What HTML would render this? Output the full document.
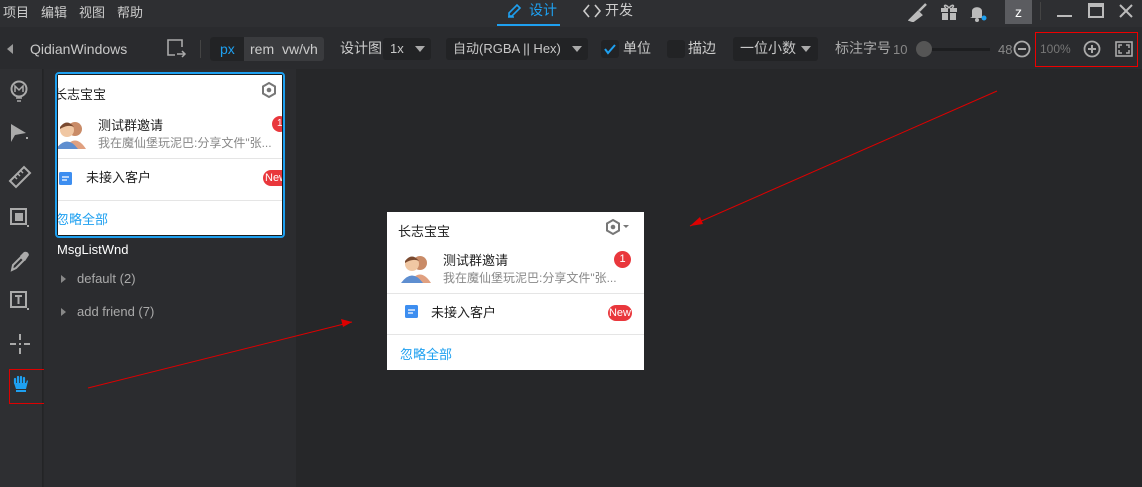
<!DOCTYPE html>
<html><head><meta charset="utf-8"><style>
*{margin:0;padding:0;box-sizing:border-box}
body{width:1142px;height:487px;overflow:hidden;background:#262729;font-family:"Liberation Sans","Noto Sans CJK SC",sans-serif;position:relative;color:#ccc}
.a{position:absolute;white-space:nowrap}
.menu{left:0;top:0;width:1142px;height:27px;background:#2e2f32}
.tb{left:0;top:27px;width:1142px;height:42px;background:#2a2b2e}
.side{left:0;top:69px;width:43px;height:418px;background:#2e2f32;border-right:1px solid #232426}
.panel{left:44px;top:69px;width:252px;height:418px;background:#2b2c2f}
.t13{font-size:13px}
.dd{background:#222325;border-radius:3px;height:22px;top:38px;font-size:13px;line-height:22px;padding-left:7px;color:#c8c8c8}
.tri{position:absolute;width:0;height:0;border-left:5px solid transparent;border-right:5px solid transparent;border-top:6px solid #aaa;top:8px}
.card{background:#fff;color:#222}
</style></head><body>
<div class="a menu"></div>
<div class="a t13" style="left:3px;top:2px;color:#ccc">项目</div>
<div class="a t13" style="left:41px;top:2px;color:#ccc">编辑</div>
<div class="a t13" style="left:79px;top:2px;color:#ccc">视图</div>
<div class="a t13" style="left:117px;top:2px;color:#ccc">帮助</div>
<svg class="a" style="left:506px;top:3px" width="18" height="16"><path d="M3 13 L3 10 L11 2 L14 5 L6 13 Z M2 14 L8 14" stroke="#1ea0f0" stroke-width="1.6" fill="none"/></svg>
<div class="a t13" style="left:529px;top:0px;color:#1ea0f0;font-size:14px">设计</div>
<div class="a" style="left:497px;top:24px;width:63px;height:2px;background:#1ea0f0"></div>
<svg class="a" style="left:582px;top:3px" width="20" height="16"><path d="M7 2 L2 8 L7 14 M13 2 L18 8 L13 14" stroke="#ccc" stroke-width="1.6" fill="none"/></svg>
<div class="a t13" style="left:605px;top:0px;font-size:14px;color:#ccc">开发</div>
<svg class="a" style="left:908px;top:2px" width="22" height="20"><path d="M2 18 L10 10 L13 13 L5 19 Z M11 9 L18 2" stroke="#bbb" stroke-width="2.5" fill="#bbb"/></svg>
<svg class="a" style="left:939px;top:2px" width="20" height="20"><rect x="2" y="6" width="16" height="4" fill="#bbb"/><rect x="3" y="11" width="14" height="7" fill="#bbb"/><rect x="9" y="6" width="2" height="12" fill="#2e2f32"/><path d="M10 6 C6 1 4 4 7 6 M10 6 C14 1 16 4 13 6" stroke="#bbb" fill="none" stroke-width="1.5"/></svg>
<svg class="a" style="left:968px;top:2px" width="22" height="20"><path d="M4 15 L4 9 C4 4 14 4 14 9 L14 15 L16 16 L2 16 Z" fill="#bbb"/><circle cx="9" cy="18" r="2" fill="#bbb"/><circle cx="16" cy="16" r="2.5" fill="#1ea0f0"/></svg>
<div class="a" style="left:1005px;top:0;width:27px;height:24px;background:#5b5c60;color:#fff;font-size:14px;text-align:center;line-height:24px">z</div>
<div class="a" style="left:1040px;top:2px;width:1px;height:18px;background:#444"></div>
<div class="a" style="left:1057px;top:15px;width:15px;height:2px;background:#bbb"></div>
<div class="a" style="left:1088px;top:3px;width:16px;height:15px;border:2px solid #bbb;border-top-width:4px"></div>
<svg class="a" style="left:1118px;top:3px" width="16" height="16"><path d="M2 2 L14 14 M14 2 L2 14" stroke="#bbb" stroke-width="2"/></svg>

<div class="a tb"></div>
<div class="a" style="left:7px;top:44px;border-top:5px solid transparent;border-bottom:5px solid transparent;border-right:6px solid #999"></div>
<div class="a t13" style="left:30px;top:41px;color:#c8c8c8;font-size:14px">QidianWindows</div>
<svg class="a" style="left:166px;top:38px" width="22" height="22"><path d="M9 17 L2 17 L2 2 L16 2 L16 9" stroke="#aaa" stroke-width="1.6" fill="none"/><path d="M11 16 L19 16 M16 13 L19 16 L16 19" stroke="#aaa" stroke-width="1.5" fill="none"/></svg>
<div class="a" style="left:200px;top:40px;width:1px;height:18px;background:#444"></div>
<div class="a" style="left:210px;top:37px;width:114px;height:24px;background:#3a3b3e;border-radius:3px"></div>
<div class="a" style="left:210px;top:37px;width:34px;height:24px;background:#222325;border-radius:3px 0 0 3px"></div>
<div class="a t13" style="left:220px;top:41px;color:#1ea0f0;font-size:14px">px</div>
<div class="a t13" style="left:250px;top:41px;color:#ccc;font-size:14px">rem</div>
<div class="a t13" style="left:282px;top:41px;color:#ccc;font-size:14px">vw/vh</div>
<div class="a t13" style="left:340px;top:38px;color:#ccc;font-size:14px">设计图</div>
<div class="a dd" style="left:383px;width:48px">1x<span class="tri" style="left:32px"></span></div>
<div class="a dd" style="left:446px;width:142px">自动(RGBA || Hex)<span class="tri" style="left:126px"></span></div>
<div class="a" style="left:601px;top:40px;width:18px;height:18px;background:#222325;border-radius:3px"></div>
<svg class="a" style="left:603px;top:42px" width="14" height="14"><path d="M2 7 L5 11 L12 3" stroke="#1ea0f0" stroke-width="2" fill="none"/></svg>
<div class="a t13" style="left:623px;top:38px;color:#ccc;font-size:14px">单位</div>
<div class="a" style="left:667px;top:40px;width:18px;height:18px;background:#222325;border-radius:3px"></div>
<div class="a t13" style="left:688px;top:38px;color:#ccc;font-size:14px">描边</div>
<div class="a dd" style="left:733px;width:85px;height:24px;top:37px;line-height:22px;font-size:14px">一位小数<span class="tri" style="left:68px;top:9px"></span></div>
<div class="a t13" style="left:835px;top:38px;color:#aaa;font-size:14px">标注字号</div>
<div class="a t13" style="left:893px;top:42px;color:#888">10</div>
<div class="a" style="left:925px;top:48px;width:65px;height:3px;background:#1d1e20"></div>
<div class="a" style="left:916px;top:41px;width:16px;height:16px;border-radius:50%;background:#555"></div>
<div class="a t13" style="left:998px;top:42px;color:#888">48</div>
<svg class="a" style="left:1012px;top:39px" width="20" height="20"><circle cx="10" cy="10" r="7.5" stroke="#aaa" stroke-width="1.8" fill="none"/><path d="M6 10 L14 10" stroke="#aaa" stroke-width="2"/></svg>
<div class="a" style="left:1040px;top:42px;color:#777;font-size:12px">100%</div>
<svg class="a" style="left:1082px;top:39px" width="20" height="20"><circle cx="10" cy="10" r="7.5" stroke="#aaa" stroke-width="1.8" fill="none"/><path d="M6 10 L14 10 M10 6 L10 14" stroke="#aaa" stroke-width="2"/></svg>
<svg class="a" style="left:1114px;top:39px" width="20" height="20"><rect x="2" y="3" width="16" height="14" stroke="#aaa" stroke-width="1.6" fill="none"/><path d="M5 9 L5 6 L8 6 M12 6 L15 6 L15 9 M15 11 L15 14 L12 14 M8 14 L5 14 L5 11" stroke="#aaa" stroke-width="1.5" fill="none"/></svg>
<div class="a" style="left:1035px;top:32px;width:103px;height:35px;border:1px solid #e00"></div>

<div class="a side"></div>
<svg class="a" style="left:9px;top:79px" width="22" height="26"><circle cx="10" cy="10" r="7.5" stroke="#aaa" stroke-width="2" fill="none"/><path d="M6 13 L6 7 L10 11 L14 7 L14 13" stroke="#aaa" stroke-width="1.5" fill="none"/><path d="M7 19 L13 19 M8 22 L12 22" stroke="#aaa" stroke-width="1.5"/></svg>
<svg class="a" style="left:10px;top:123px" width="20" height="20"><path d="M1 1 L16 10 L5 12 L1 19 Z" fill="#aaa"/><rect x="16" y="14" width="2" height="2" fill="#aaa"/></svg>
<svg class="a" style="left:8px;top:165px" width="24" height="24"><path d="M2 16 L16 2 L22 8 L8 22 Z" stroke="#aaa" stroke-width="2" fill="none"/><path d="M7 12 L9 14 M10 9 L12 11 M13 6 L15 8" stroke="#aaa" stroke-width="1.5"/></svg>
<svg class="a" style="left:10px;top:208px" width="20" height="20"><rect x="1" y="1" width="15" height="15" stroke="#aaa" stroke-width="2" fill="none"/><rect x="5" y="5" width="8" height="8" fill="#aaa"/><rect x="17" y="17" width="2" height="2" fill="#aaa"/></svg>
<svg class="a" style="left:9px;top:250px" width="22" height="22"><path d="M3 20 L4 15 L12 7 L15 10 L7 18 Z" stroke="#aaa" stroke-width="2" fill="none"/><path d="M11 6 L15 2 Q19 1 20 5 L16 11 Z" fill="#aaa"/></svg>
<svg class="a" style="left:10px;top:291px" width="20" height="20"><rect x="1" y="1" width="15" height="15" stroke="#aaa" stroke-width="2" fill="none"/><path d="M5 5 L12 5 M8.5 5 L8.5 13" stroke="#aaa" stroke-width="2"/><rect x="17" y="17" width="2" height="2" fill="#aaa"/></svg>
<svg class="a" style="left:9px;top:333px" width="22" height="22"><path d="M11 1 L11 7 M11 15 L11 21 M1 11 L7 11 M15 11 L21 11" stroke="#aaa" stroke-width="2"/><rect x="10" y="10" width="2" height="2" fill="#aaa"/></svg>
<div class="a" style="left:9px;top:369px;width:41px;height:35px;border:1px solid #d00"></div>
<svg class="a" style="left:12px;top:375px" width="18" height="20"><path d="M3 8 L3 4 M6 8 L6 2 M9 8 L9 2 M12 8 L12 3" stroke="#1ea0f0" stroke-width="2.2" stroke-linecap="round"/><path d="M2 8 L14 8 L15 5 L16 6 L14 14 L4 14 Z" fill="#1ea0f0"/><rect x="4" y="15" width="10" height="2" fill="#1ea0f0"/></svg>

<div class="a panel"></div>
<div class="a" style="left:55px;top:72px;width:230px;height:166px;border:2px solid #1ea0f0;border-radius:4px;background:#1b1b1b;padding:1px">
<div style="position:relative;width:224px;height:160px;background:#fff;overflow:hidden;color:#222">
<div class="a" style="left:-4px;top:9px;font-size:13px">长志宝宝</div>
<svg class="a" style="left:202px;top:6px" width="18" height="18"><path d="M9 2 L15 5.5 L15 12.5 L9 16 L3 12.5 L3 5.5 Z" stroke="#777" stroke-width="2" fill="none"/><circle cx="9" cy="9" r="2.3" fill="#777"/></svg>
<svg class="a" style="left:-2px;top:43px" width="30" height="32"><circle cx="19" cy="11" r="7" fill="#c98b67"/><path d="M8 31 Q19 14 30 31 Z" fill="#e0a080"/><circle cx="11" cy="12" r="7" fill="#f0c7a3"/><path d="M4 9 Q11 0 18 9 Q12 6 4 11 Z" fill="#7a4a30"/><path d="M0 31 Q11 16 22 31 Z" fill="#5e8ed0"/></svg>
<div class="a" style="left:40px;top:40px;font-size:13px">测试群邀请</div>
<div class="a" style="left:40px;top:59px;font-size:12px;color:#888">我在魔仙堡玩泥巴:分享文件"张...</div>
<div class="a" style="left:214px;top:41px;width:16px;height:16px;border-radius:50%;background:#e9373c;color:#fff;font-size:10px;line-height:16px;padding-left:5px">1</div>
<div class="a" style="left:0;top:83px;width:224px;height:1px;background:#e5e5e5"></div>
<svg class="a" style="left:1px;top:97px" width="13" height="13"><rect width="13" height="13" rx="1.5" fill="#3d8ef0"/><path d="M3 5 L10 5 M3 8 L8 8" stroke="#fff" stroke-width="1.3"/></svg>
<div class="a" style="left:28px;top:92px;font-size:13px">未接入客户</div>
<div class="a" style="left:205px;top:95px;width:30px;height:16px;border-radius:8px;background:#e9373c;color:#fff;font-size:11px;line-height:16px;padding-left:2px">New</div>
<div class="a" style="left:0;top:125px;width:224px;height:1px;background:#e5e5e5"></div>
<div class="a" style="left:-2px;top:134px;font-size:13px;color:#1ea0f0">忽略全部</div>
</div></div>
<div class="a" style="left:57px;top:242px;font-size:13px;color:#fff">MsgListWnd</div>
<div class="a" style="left:61px;top:275px;border-top:4px solid transparent;border-bottom:4px solid transparent;border-left:5px solid #888"></div>
<div class="a" style="left:77px;top:271px;font-size:13px;color:#aaa">default (2)</div>
<div class="a" style="left:61px;top:308px;border-top:4px solid transparent;border-bottom:4px solid transparent;border-left:5px solid #888"></div>
<div class="a" style="left:77px;top:304px;font-size:13px;color:#aaa">add friend (7)</div>

<div class="a card" style="left:387px;top:212px;width:257px;height:158px">
<div class="a" style="left:11px;top:9px;font-size:13px">长志宝宝</div>
<svg class="a" style="left:217px;top:6px" width="28" height="18"><path d="M9 2 L15 5.5 L15 12.5 L9 16 L3 12.5 L3 5.5 Z" stroke="#777" stroke-width="2" fill="none"/><circle cx="9" cy="9" r="2.3" fill="#777"/><path d="M19 7 L25 7 L22 10 Z" fill="#777"/></svg>
<svg class="a" style="left:14px;top:40px" width="30" height="32"><circle cx="19" cy="11" r="7" fill="#c98b67"/><path d="M8 31 Q19 14 30 31 Z" fill="#e0a080"/><circle cx="11" cy="12" r="7" fill="#f0c7a3"/><path d="M4 9 Q11 0 18 9 Q12 6 4 11 Z" fill="#7a4a30"/><path d="M0 31 Q11 16 22 31 Z" fill="#5e8ed0"/></svg>
<div class="a" style="left:56px;top:38px;font-size:13px">测试群邀请</div>
<div class="a" style="left:56px;top:57px;font-size:12px;color:#888">我在魔仙堡玩泥巴:分享文件"张...</div>
<div class="a" style="left:227px;top:39px;width:17px;height:17px;border-radius:50%;background:#e9373c;color:#fff;font-size:11px;line-height:17px;text-align:center">1</div>
<div class="a" style="left:0;top:81px;width:257px;height:1px;background:#e5e5e5"></div>
<svg class="a" style="left:18px;top:93px" width="13" height="13"><rect width="13" height="13" rx="1.5" fill="#3d8ef0"/><path d="M3 5 L10 5 M3 8 L8 8" stroke="#fff" stroke-width="1.3"/></svg>
<div class="a" style="left:44px;top:90px;font-size:13px">未接入客户</div>
<div class="a" style="left:221px;top:93px;width:24px;height:16px;border-radius:8px;background:#e9373c;color:#fff;font-size:11px;line-height:16px;text-align:center">New</div>
<div class="a" style="left:0;top:122px;width:257px;height:1px;background:#e5e5e5"></div>
<div class="a" style="left:13px;top:132px;font-size:13px;color:#1ea0f0">忽略全部</div>
</div>

<svg class="a" style="left:0;top:0" width="1142" height="487"><path d="M997 91 L690 226" stroke="#d00" stroke-width="1"/><path d="M690 226 L700 217 L703 224 Z" fill="#d00"/><path d="M88 388 L352 322" stroke="#d00" stroke-width="1"/><path d="M352 322 L341 319 L343 327 Z" fill="#d00"/></svg>
</body></html>
